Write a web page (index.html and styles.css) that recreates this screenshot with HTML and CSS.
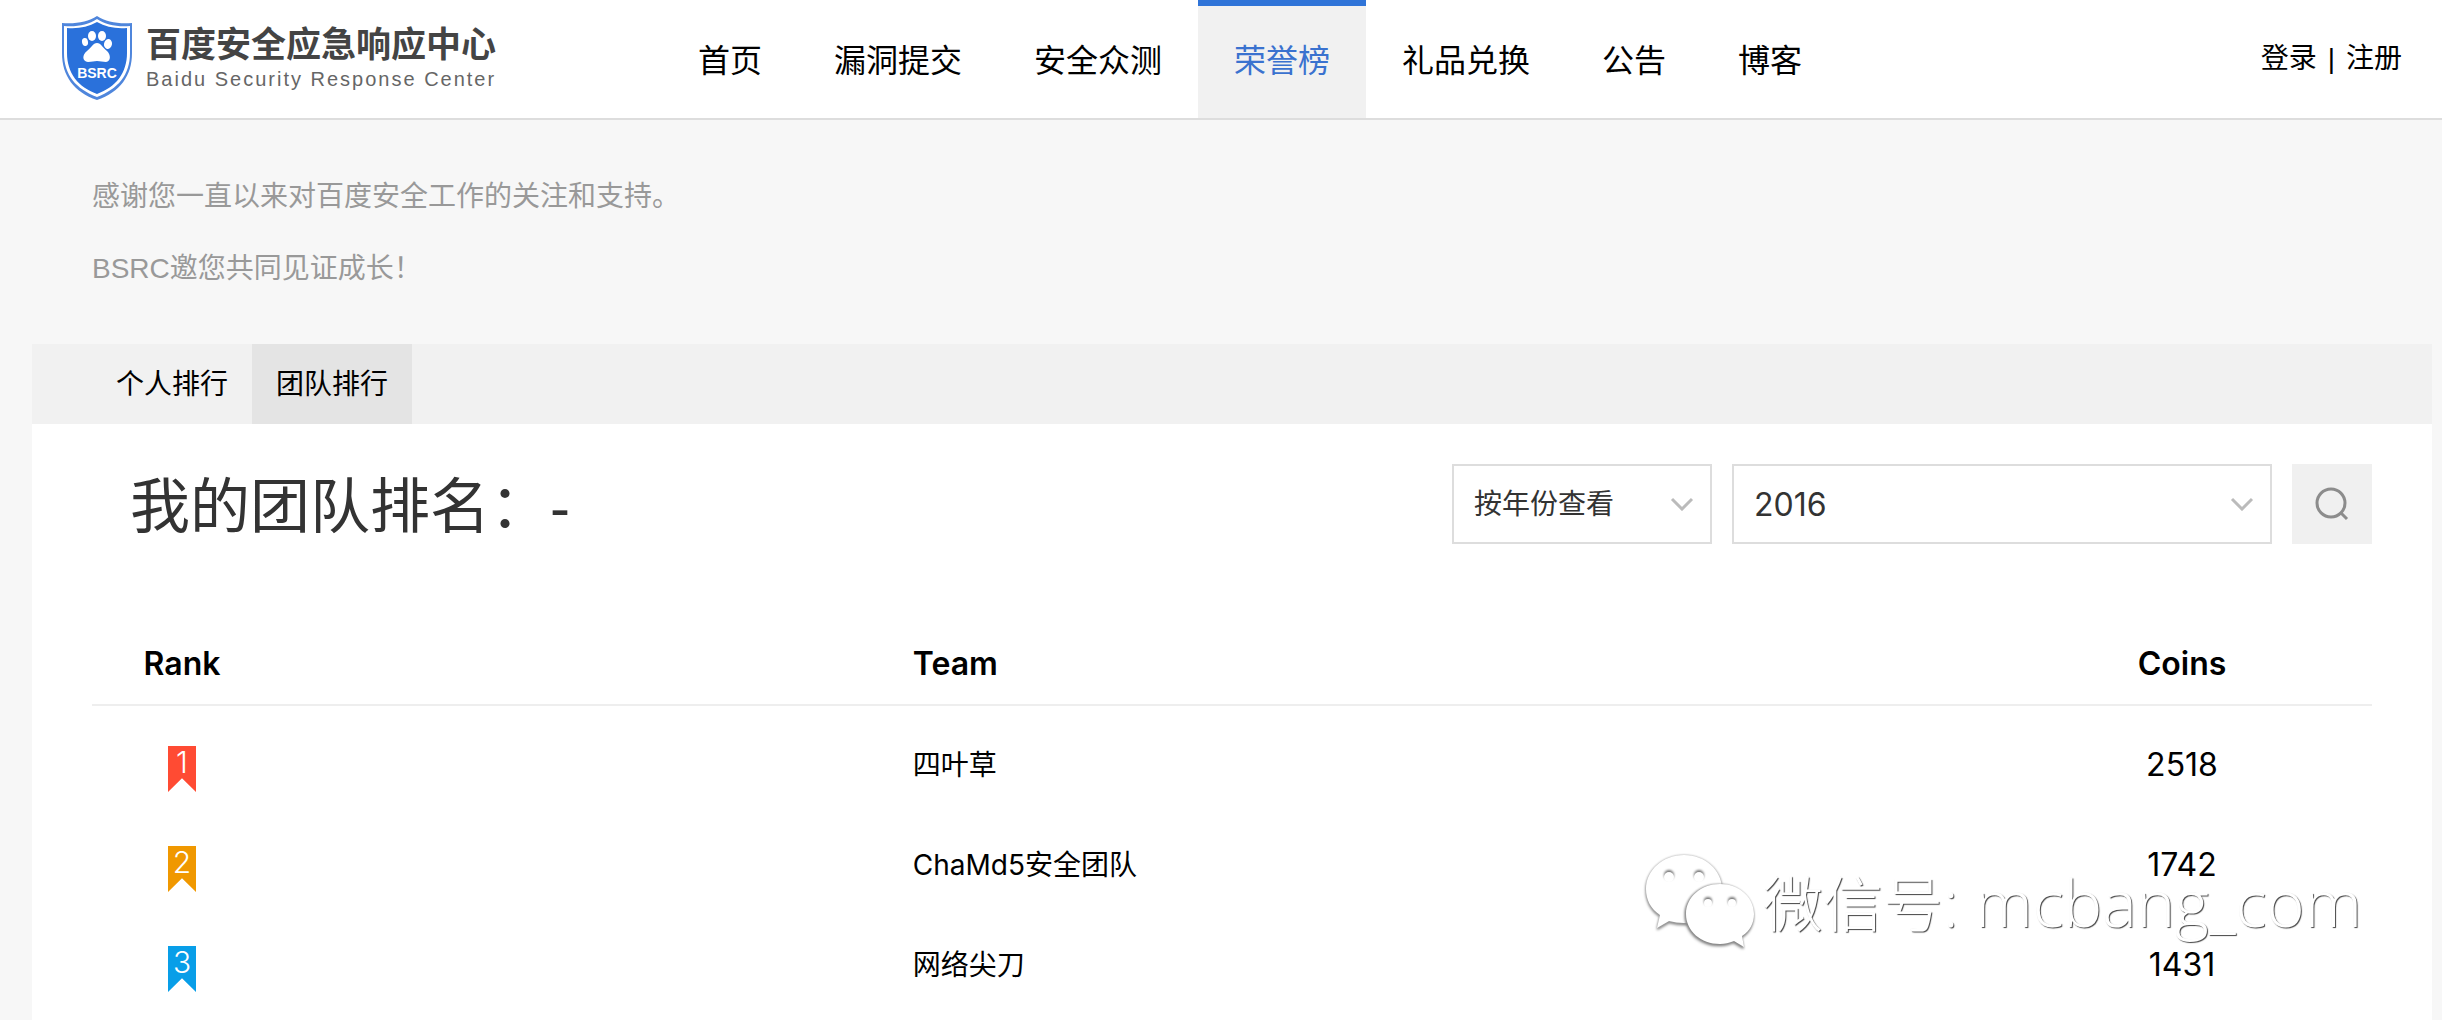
FILE: index.html
```html
<!DOCTYPE html>
<html lang="zh-CN">
<head>
<meta charset="utf-8">
<title>百度安全应急响应中心 - 荣誉榜</title>
<link rel="stylesheet" href="styles.css">
</head>
<body>
<header class="header">
  <a class="logo" href="#">
    <svg class="logo-mark" viewBox="0 0 70 84" aria-hidden="true">
      <path d="M35 0C26 6 14 8 0 7V37C0 60 12 76 35 84C58 76 70 60 70 37V7C56 8 44 6 35 0Z" fill="#4f86dc"/>
      <path d="M35 3C26 9 15 11 2 10V37C2 59 14 73 35 81C56 73 68 59 68 37V10C55 11 44 9 35 3Z" fill="#fff"/>
      <path d="M35 6C26 11 16 13 5 12V37C5 57 16 71 35 78C54 71 65 57 65 37V12C54 13 44 11 35 6Z" fill="#2a71db"/>
      <g fill="#fff">
        <ellipse cx="23" cy="26" rx="3" ry="4" transform="rotate(-10 23 26)"/>
        <ellipse cx="30" cy="20" rx="4" ry="5"/>
        <ellipse cx="40" cy="20" rx="4" ry="5"/>
        <ellipse cx="46" cy="28" rx="4" ry="5" transform="rotate(12 46 28)"/>
        <path d="M35 27C31 27 29 32 25 35C20 39 20 45 26 46C30 46 32 45 35 45C38 45 41 46 44 46C49 45 49 39 45 35C41 32 39 27 35 27Z"/>
      </g>
      <text class="logo-code" x="35" y="62" text-anchor="middle">BSRC</text>
    </svg>
    <span class="logo-text">
      <span class="logo-title">百度安全应急响应中心</span>
      <span class="logo-sub">Baidu Security Response Center</span>
    </span>
  </a>
  <nav class="nav">
    <a href="#">首页</a>
    <a href="#">漏洞提交</a>
    <a href="#">安全众测</a>
    <a class="active" href="#">荣誉榜</a>
    <a href="#">礼品兑换</a>
    <a href="#">公告</a>
    <a href="#">博客</a>
  </nav>
  <div class="account"><a href="#">登录</a><span>|</span><a href="#">注册</a></div>
</header>

<section class="intro">
  <p>感谢您一直以来对百度安全工作的关注和支持。</p>
  <p>BSRC邀您共同见证成长！</p>
</section>

<main class="board">
  <div class="tabs">
    <button type="button">个人排行</button>
    <button type="button" class="active">团队排行</button>
  </div>
  <div class="panel">
    <div class="toolbar">
      <h1>我的团队排名：-</h1>
      <form class="filters">
        <div class="pick pick-mode">
          <select aria-label="查看方式"><option>按年份查看</option></select>
          <svg viewBox="0 0 24 14" aria-hidden="true"><path d="M2 2L12 12L22 2"/></svg>
        </div>
        <div class="pick pick-year">
          <select aria-label="年份"><option>2016</option></select>
          <svg viewBox="0 0 24 14" aria-hidden="true"><path d="M2 2L12 12L22 2"/></svg>
        </div>
        <button class="search" type="button" aria-label="搜索">
          <svg viewBox="0 0 36 36" aria-hidden="true"><circle cx="17" cy="17" r="14"/><path d="M27 27L33 33"/></svg>
        </button>
      </form>
    </div>

    <table class="ranking">
      <thead>
        <tr><th class="rank"><span>Rank</span></th><th class="team">Team</th><th class="coins">Coins</th></tr>
      </thead>
      <tbody>
        <tr><td class="rank"><span><b class="ribbon first">1</b></span></td><td class="team">四叶草</td><td class="coins">2518</td></tr>
        <tr><td class="rank"><span><b class="ribbon second">2</b></span></td><td class="team">ChaMd5安全团队</td><td class="coins">1742</td></tr>
        <tr><td class="rank"><span><b class="ribbon third">3</b></span></td><td class="team">网络尖刀</td><td class="coins">1431</td></tr>
      </tbody>
    </table>

    <div class="watermark">
      <svg viewBox="0 0 124 104" aria-hidden="true">
        <g class="bubble">
          <path d="M45 5C66 5 83 20 83 39C83 58 66 73 45 73C40 73 35 72 30 71L18 78L21 65C12 59 7 50 7 39C7 20 24 5 45 5Z"/>
        </g>
        <g class="eyes"><circle cx="30" cy="27" r="5"/><circle cx="60" cy="27" r="5"/></g>
        <g class="bubble bubble-front">
          <path d="M81 34C100 34 115 47 115 64C115 73 111 81 103 86L105 97L95 91C90 93 86 94 81 94C62 94 47 81 47 64C47 47 62 34 81 34Z"/>
        </g>
        <g class="eyes"><circle cx="69" cy="53" r="4"/><circle cx="93" cy="53" r="4"/></g>
      </svg>
      <span>微信号<span class="account-name">: mcbang_com</span></span>
    </div>
  </div>
</main>
</body>
</html>
```

FILE: styles.css
```css
* {
  box-sizing: border-box;
}

body {
  display: flex;
  flex-direction: column;
  min-height: 100vh;
  margin: 0;
  background: #f7f7f7;
  color: #000;
  font-family: "Liberation Sans", "Noto Sans CJK SC", sans-serif;
  font-size: 28px;
  line-height: 40px;
}

a {
  color: inherit;
  text-decoration: none;
}

button,
select {
  border: 0;
  border-radius: 0;
  font: inherit;
  color: inherit;
}

.header {
  display: flex;
  height: 120px;
  padding: 0 40px 0 62px;
  background: #fff;
  border-bottom: 2px solid #ddd;
}

.logo {
  display: flex;
  align-items: flex-start;
  gap: 14px;
  flex: 0 0 600px;
  padding-top: 16px;
}

.logo-mark {
  width: 70px;
  height: 84px;
}

.logo-code {
  fill: #fff;
  font-size: 14px;
  font-weight: bold;
}

.logo-text {
  display: flex;
  flex-direction: column;
  padding-top: 9px;
}

.logo-title {
  color: #444;
  font-size: 35px;
  font-weight: bold;
  line-height: 40px;
}

.logo-sub {
  color: #666;
  font-size: 20px;
  line-height: 28px;
  letter-spacing: 2px;
}

.nav {
  display: flex;
  font-size: 32px;
}

.nav a {
  padding: 35px 36px 0;
  border-top: 6px solid transparent;
}

.nav .active {
  background: #f1f1f1;
  border-top-color: #2f74d8;
  color: #3a72cf;
}

.account {
  display: flex;
  gap: 11px;
  margin-left: auto;
  padding-top: 39px;
}

.intro {
  padding: 57px 92px 55px;
  color: #999;
}

.intro p {
  margin: 0 0 32px;
}

.intro p:last-child {
  margin: 0;
}

.board {
  display: flex;
  flex: 1;
  flex-direction: column;
  margin: 0 10px 0 32px;
}

.tabs {
  display: flex;
  height: 80px;
  padding-left: 60px;
  background: #f1f1f1;
}

.tabs button {
  padding: 2px 24px 0;
  background: none;
}

.tabs .active {
  background: #e4e4e4;
}

.panel {
  position: relative;
  flex: 1;
  padding: 40px 60px 0;
  background: #fff;
}

.toolbar {
  display: flex;
  justify-content: space-between;
  height: 80px;
  padding-left: 38px;
}

h1 {
  margin: 0;
  padding-top: 4px;
  color: #333;
  font-size: 60px;
  font-weight: 400;
  line-height: 80px;
}

.filters {
  display: flex;
  gap: 20px;
  color: #333;
}

.pick {
  display: grid;
  align-items: center;
  height: 80px;
}

.pick-mode {
  width: 260px;
}

.pick-year {
  width: 540px;
  font-family: Inter, sans-serif;
  font-size: 32px;
}

.pick select {
  grid-area: 1 / 1;
  width: 100%;
  height: 80px;
  padding: 2px 20px 0;
  border: 2px solid #ddd;
  background: #fff;
  appearance: none;
}

.pick svg {
  grid-area: 1 / 1;
  justify-self: end;
  width: 24px;
  height: 14px;
  margin-right: 18px;
  fill: none;
  stroke: #bbb;
  stroke-width: 3;
  pointer-events: none;
}

.search {
  display: grid;
  place-items: center;
  width: 80px;
  height: 80px;
  padding: 0;
  background: #f0f0f0;
}

.search svg {
  width: 36px;
  height: 36px;
  fill: none;
  stroke: #8c8c8c;
  stroke-width: 3;
}

.ranking {
  width: 100%;
  margin-top: 80px;
  border-collapse: separate;
  border-spacing: 0;
  table-layout: fixed;
  font-family: Inter, "Noto Sans CJK SC", sans-serif;
}

.ranking th {
  height: 82px;
  padding: 0;
  border-bottom: 2px solid #eee;
  font-size: 32px;
  font-weight: 600;
  text-align: left;
}

.ranking td {
  height: 100px;
  padding: 18px 0 0;
}

.ranking .rank {
  width: 36%;
}

.ranking .rank span {
  display: flex;
  justify-content: center;
  width: 180px;
}

.ranking td.rank {
  padding-top: 26px;
}

.ranking .coins {
  width: 380px;
  font-size: 32px;
  text-align: center;
}

.ribbon {
  width: 28px;
  height: 46px;
  color: #fff;
  font-size: 30px;
  font-weight: 300;
  line-height: 32px;
  text-align: center;
  clip-path: polygon(0 0, 100% 0, 100% 100%, 50% 70%, 0 100%);
}

.first {
  background: #ff4b33;
}

.second {
  background: #f09800;
}

.third {
  background: #089ee8;
}

.watermark {
  position: absolute;
  top: 426px;
  right: 70px;
  display: flex;
  color: #fff;
  font-family: "Open Sans", "Noto Sans CJK SC", sans-serif;
  font-size: 60px;
  font-weight: 300;
  line-height: 104px;
  text-shadow: 1px 1px 1px #444;
  white-space: nowrap;
  pointer-events: none;
}

.account-name {
  font-size: 65px;
}

.watermark svg {
  width: 124px;
  height: 104px;
}

.bubble {
  fill: #fff;
  filter: drop-shadow(0 0 1px #aaa) drop-shadow(0 2px 1px #888);
}

.bubble-front {
  filter: drop-shadow(-1px 0 1px #888) drop-shadow(0 2px 1px #888);
}

.eyes {
  fill: #fff;
  filter: drop-shadow(0 -2px 1px #777);
}
```
